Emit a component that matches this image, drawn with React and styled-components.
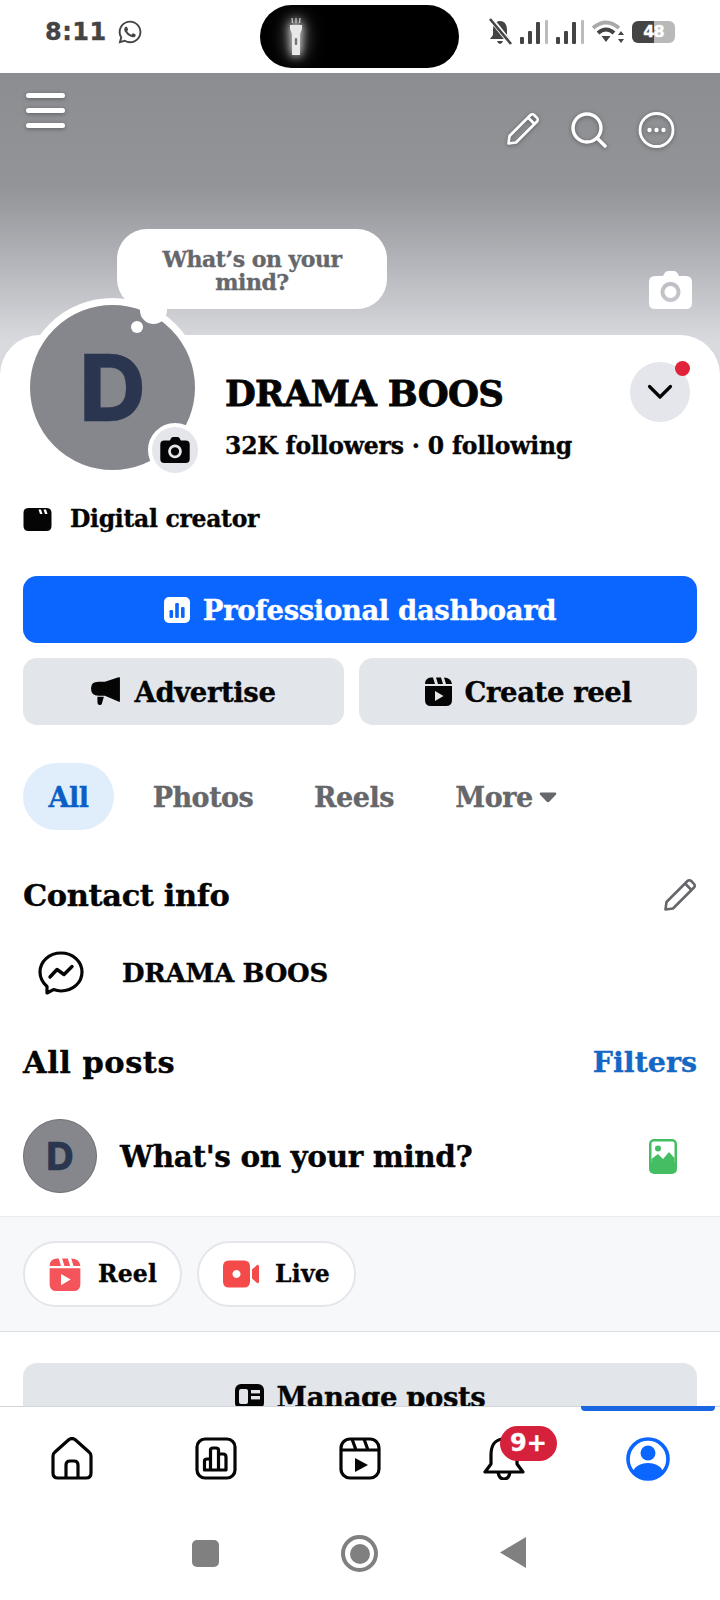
import React from 'react';
import styled, { createGlobalStyle } from 'styled-components';
import { FaWhatsapp } from 'react-icons/fa';

const SLAB = '"DejaVu Serif", "Liberation Serif", serif';

const Global = createGlobalStyle`
  html, body { margin: 0; padding: 0; background: #fff; }
  * { box-sizing: border-box; }
`;

const Screen = styled.div`
  width: 720px;
  height: 1600px;
  display: flex;
  flex-direction: column;
  overflow: hidden;
  background: #fff;
  font-family: ${SLAB};
  font-weight: 700;
  color: #050505;
  -webkit-text-stroke: 0.35px;
`;

const StatusBar = styled.div`
  height: 73px;
  flex: none;
  display: flex;
  align-items: flex-start;
`;

const StatusLeft = styled.div`
  width: 260px;
  height: 63px;
  padding-left: 45px;
  display: flex;
  align-items: center;
  gap: 10px;
  color: #444;
`;

const Time = styled.span`
  font: 700 24px "DejaVu Sans", sans-serif;
  letter-spacing: 0.5px;
`;

const Pill = styled.div`
  width: 199px;
  height: 63px;
  margin-top: 5px;
  border-radius: 32px;
  background: #000;
  padding: 12px 0 0 23px;
`;

const StatusRight = styled.div`
  margin-left: 29px;
  height: 63px;
  display: flex;
  align-items: center;
  gap: 7px;
`;

const Battery = styled.div`
  width: 43px;
  height: 22px;
  border-radius: 6px;
  background: linear-gradient(90deg, #444 0 52%, #b9b9b9 52% 100%);
  color: #fff;
  font: 700 16px "DejaVu Sans", sans-serif;
  letter-spacing: -1px;
  text-align: center;
  line-height: 22px;
`;

const Scroll = styled.div`
  flex: 1;
  min-height: 0;
  overflow: hidden;
`;

const Cover = styled.div`
  position: relative;
  height: 300px;
  padding: 19px 26px 0;
  display: flex;
  justify-content: space-between;
  align-items: flex-start;
  background: linear-gradient(180deg, #8c8d91 0, #939498 110px, #97989c 125px, #b4b5ba 190px, #d8dade 268px);
`;

const Burger = styled.div`
  width: 39px;
  display: flex;
  flex-direction: column;
  gap: 10px;
  padding-top: 1px;
  filter: drop-shadow(0 1px 2px rgba(0, 0, 0, 0.35));
`;

const BurgerLine = styled.span`
  height: 5px;
  border-radius: 3px;
  background: #fff;
`;

const CoverActions = styled.div`
  display: flex;
  gap: 31px;
  margin: 20px 19px 0 0;
  filter: drop-shadow(0 1px 2px rgba(0, 0, 0, 0.35));
`;

const Bubble = styled.div`
  position: absolute;
  left: 117px;
  top: 156px;
  width: 270px;
  height: 80px;
  border-radius: 30px;
  background: #fff;
  color: #65676b;
  font-size: 22px;
  line-height: 23px;
  text-align: center;
  padding: 19px 40px 0;
  letter-spacing: -0.5px;
`;

const CoverCamera = styled.div`
  position: absolute;
  right: 28px;
  top: 198px;
  line-height: 0;
`;

const Card = styled.div`
  position: relative;
  margin-top: -38px;
  padding: 0 23px;
  border-radius: 40px 40px 0 0;
  background: #fff;
`;

const ProfileRow = styled.div`
  display: flex;
  align-items: flex-start;
`;

const AvatarWrap = styled.div`
  position: relative;
  flex: none;
  margin-top: -37px;
`;

const Avatar = styled.div`
  width: ${p => p.$size}px;
  height: ${p => p.$size}px;
  border-radius: 50%;
  border: ${p => p.$ring}px solid ${p => (p.$ring > 2 ? '#fff' : '#6e6f74')};
  background: #86878c;
  color: #2a3550;
  display: flex;
  align-items: center;
  justify-content: center;
  flex: none;
  font-family: Inter, sans-serif;
  font-weight: 800;
  font-size: ${p => p.$font}px;
`;

const TailBig = styled.span`
  position: absolute;
  left: 117px;
  top: -1px;
  width: 27px;
  height: 27px;
  border-radius: 50%;
  background: #fff;
`;

const TailDot = styled.span`
  position: absolute;
  left: 108px;
  top: 23px;
  width: 12px;
  height: 12px;
  border-radius: 50%;
  background: #fff;
`;

const AvatarCamera = styled.div`
  position: absolute;
  left: 125px;
  top: 125px;
  width: 54px;
  height: 54px;
  border-radius: 50%;
  border: 4px solid #fff;
  background: #e4e6eb;
  display: flex;
  align-items: center;
  justify-content: center;
`;

const Info = styled.div`
  flex: 1;
  margin-left: 23px;
  padding-top: 39px;
`;

const Name = styled.div`
  font-size: 35.5px;
  line-height: 40px;
  letter-spacing: -0.7px;
  -webkit-text-stroke: 0.8px #050505;
`;

const Stats = styled.div`
  margin-top: 19px;
  font-size: 23.5px;
  line-height: 26px;
  letter-spacing: -0.2px;
`;

const Chevron = styled.div`
  position: relative;
  flex: none;
  width: 60px;
  height: 60px;
  margin: 27px 7px 0 0;
  border-radius: 50%;
  background: #e4e6eb;
  display: flex;
  align-items: center;
  justify-content: center;
`;

const RedDot = styled.span`
  position: absolute;
  right: 0;
  top: -1px;
  width: 15px;
  height: 15px;
  border-radius: 50%;
  background: #e0223a;
`;

const CreatorRow = styled.div`
  margin-top: 27px;
  height: 30px;
  display: flex;
  align-items: center;
  gap: 18px;
  font-size: 23.5px;
  letter-spacing: -0.3px;
`;

const Button = styled.div`
  height: 67px;
  flex: ${p => p.$flex || 'none'};
  border-radius: 14px;
  display: flex;
  align-items: center;
  justify-content: center;
  gap: 13px;
  font-size: 27.5px;
  letter-spacing: -0.4px;
  background: ${p => (p.$primary ? '#0a66ff' : '#e2e5ea')};
  color: ${p => (p.$primary ? '#fff' : '#050505')};
`;

const PrimaryWrap = styled.div`
  margin-top: 42px;
  display: flex;
  flex-direction: column;
`;

const ButtonRow = styled.div`
  margin-top: 15px;
  display: flex;
  gap: 15px;
`;

const Tabs = styled.div`
  margin-top: 38px;
  height: 67px;
  display: flex;
  align-items: center;
`;

const Tab = styled.div`
  height: 67px;
  padding-top: 2px;
  display: flex;
  align-items: center;
  justify-content: center;
  gap: 6px;
  border-radius: 34px;
  font-size: 27px;
  letter-spacing: -0.5px;
  width: ${p => p.$w}px;
  margin-right: ${p => p.$gap}px;
  background: ${p => (p.$active ? '#e0eefb' : 'transparent')};
  color: ${p => (p.$active ? '#0b5fc4' : '#65676b')};
`;

const SectionRow = styled.div`
  margin-top: ${p => p.$top}px;
  height: 36px;
  display: flex;
  align-items: center;
  justify-content: space-between;
`;

const Heading = styled.div`
  font-size: 30.5px;
  letter-spacing: ${p => p.$track || -0.4}px;
`;

const FilterLink = styled.div`
  font-size: 28.5px;
  color: #1467c4;
`;

const ContactRow = styled.div`
  margin-top: 38px;
  padding-left: 15px;
  height: 44px;
  display: flex;
  align-items: center;
  gap: 38px;
  font-size: 26px;
  letter-spacing: -0.3px;
`;

const Composer = styled.div`
  margin-top: 39px;
  height: 74px;
  display: flex;
  align-items: center;
`;

const ComposerText = styled.div`
  flex: 1;
  margin-left: 23px;
  font-size: 29.5px;
  letter-spacing: -0.4px;
`;

const ComposerIcon = styled.div`
  margin-right: 20px;
  line-height: 0;
`;

const Band = styled.div`
  margin-top: 23px;
  height: 116px;
  padding: 24px 23px 0;
  display: flex;
  align-items: flex-start;
  gap: 15px;
  background: #f7f8fa;
  border-top: 1px solid #e9ebee;
  border-bottom: 1px solid #dadde1;
`;

const Chip = styled.div`
  width: 159px;
  height: 66px;
  border-radius: 33px;
  border: 2px solid #e4e6eb;
  background: #fff;
  display: flex;
  align-items: center;
  justify-content: center;
  gap: 16px;
  font-size: 23.5px;
  letter-spacing: 0.2px;
`;

const ManageWrap = styled.div`
  margin-top: 31px;
  padding: 0 23px;
`;

const BottomArea = styled.div`
  position: relative;
  flex: none;
  height: 194px;
  background: #fff;
  border-top: 1px solid #d3d6db;
`;

const Indicator = styled.span`
  position: absolute;
  left: 581px;
  top: -1px;
  width: 134px;
  height: 5px;
  border-radius: 0 0 4px 4px;
  background: #1a66e0;
`;

const NavRow = styled.div`
  height: 107px;
  padding-top: 30px;
  display: flex;
  align-items: flex-start;
`;

const NavItem = styled.div`
  position: relative;
  width: 144px;
  display: flex;
  justify-content: center;
  line-height: 0;
`;

const Badge = styled.span`
  position: absolute;
  left: 68px;
  top: -11px;
  width: 57px;
  height: 35px;
  border-radius: 18px;
  background: #d6213c;
  color: #fff;
  font: 700 24px/35px "DejaVu Sans", sans-serif;
  text-align: center;
`;

const SystemBar = styled.div`
  height: 66px;
  padding-top: 24px;
  display: flex;
  align-items: flex-start;
`;

const SysSquare = styled.span`
  width: 27px;
  height: 27px;
  margin: 2px 0 0 192px;
  border-radius: 5px;
  background: #808080;
`;

const SysCircle = styled.span`
  width: 37px;
  height: 37px;
  margin: -3px 0 0 122px;
  border-radius: 50%;
  border: 4px solid #808080;
  display: flex;
  align-items: center;
  justify-content: center;
  &::after {
    content: '';
    width: 20px;
    height: 20px;
    border-radius: 50%;
    background: #808080;
  }
`;

const SysBack = styled.span`
  width: 26px;
  height: 31px;
  margin: -1px 0 0 122px;
  background: #808080;
  clip-path: polygon(100% 0, 100% 100%, 0 50%);
`;

const PencilIcon = ({ size = 34, color = '#fff', w = 2.6 }) => (
  <svg width={size} height={size} viewBox="0 0 34 34" fill="none" stroke={color} strokeWidth={w} strokeLinejoin="round">
    <path d="M2.5 31.5 L3.5 24 L24.5 3 a2.6 2.6 0 0 1 3.7 0 L31 5.8 a2.6 2.6 0 0 1 0 3.7 L10 30.5 Z" />
    <path d="M22 5.5 L28.5 12" />
  </svg>
);

const SearchIcon = () => (
  <svg width="36" height="36" viewBox="0 0 36 36" fill="none" stroke="#fff" strokeWidth="3.4" strokeLinecap="round">
    <circle cx="16" cy="16" r="14" />
    <path d="M26 26 L34 34" />
  </svg>
);

const MoreIcon = () => (
  <svg width="37" height="36" viewBox="0 0 37 36">
    <circle cx="18.5" cy="18" r="16.5" fill="none" stroke="#fff" strokeWidth="2.8" />
    <circle cx="11.5" cy="18" r="2.2" fill="#fff" />
    <circle cx="18.5" cy="18" r="2.2" fill="#fff" />
    <circle cx="25.5" cy="18" r="2.2" fill="#fff" />
  </svg>
);

const CameraIcon = ({ width = 43, height = 38, color = '#fff' }) => (
  <svg width={width} height={height} viewBox="0 0 43 38">
    <path
      fillRule="evenodd"
      fill={color}
      d="M14 5 L16 1.5 Q17 0 19 0 H25 Q27 0 28 1.5 L30 5 H37 Q43 5 43 11 V32 Q43 38 37 38 H6 Q0 38 0 32 V11 Q0 5 6 5 Z M21.5 11 a10 10 0 1 0 0.01 0 Z M21.5 15 a6 6 0 1 1 -0.01 0 Z"
    />
  </svg>
);

const ChevronIcon = () => (
  <svg width="26" height="16" viewBox="0 0 26 16" fill="none" stroke="#050505" strokeWidth="3.2" strokeLinecap="round" strokeLinejoin="round">
    <path d="M2.5 2.5 L13 13 L23.5 2.5" />
  </svg>
);

const FlashIcon = () => (
  <svg width="26" height="40" viewBox="0 0 26 40" style={{ overflow: 'visible', filter: 'drop-shadow(0 0 5px #fff) drop-shadow(0 0 9px rgba(255,255,255,0.6))' }}>
    <g stroke="#ccc" strokeWidth="1.2">
      <path d="M9 1 L9.5 6 M13 1 V6 M17 1 L16.5 6" />
    </g>
    <path fill="#e8e8e8" d="M7 8 H19 V12 L17 17 V38 H9 V17 L7 12 Z" />
    <rect x="11.8" y="21" width="2.4" height="7" rx="1" fill="#777" />
  </svg>
);

const BellOffIcon = () => (
  <svg width="25" height="28" viewBox="0 0 25 28">
    <path fill="#444" d="M12 3 C7 3 5 7 5 12 V17 L2 21 H22 L19 17 V12 C19 7 17 3 12 3 Z M9 23 H15 Q14 26 12 26 Q10 26 9 23 Z" />
    <path d="M3 1 L23 26" stroke="#fff" strokeWidth="5" />
    <path d="M2 1 L23 26" stroke="#444" strokeWidth="2.6" />
  </svg>
);

const SignalIcon = () => (
  <svg width="29" height="24" viewBox="0 0 29 24" fill="#444">
    <rect x="0" y="17" width="4" height="7" rx="1" />
    <rect x="8" y="11" width="4" height="13" rx="1" />
    <rect x="16" y="2" width="4" height="22" rx="1" />
    <rect x="25" y="0" width="3" height="24" rx="1" fill="#bbb" />
  </svg>
);

const WifiIcon = () => (
  <svg width="33" height="24" viewBox="0 0 33 24" fill="none">
    <path d="M1 8 Q14 -3 27 8" stroke="#aaa" strokeWidth="4" />
    <path d="M6 13 Q14 6 22 13" stroke="#444" strokeWidth="4" />
    <path d="M9.5 16 L18.5 16 L14 22 Z" fill="#444" />
    <path d="M29 11 L32 15 H26 Z M29 23 L32 19 H26 Z" fill="#444" />
  </svg>
);

const ClapperIcon = () => (
  <svg width="29" height="23" viewBox="0 0 28 23">
    <path fill="#050505" fillRule="evenodd" d="M5 0 H23 Q28 0 28 5 V18 Q28 23 23 23 H5 Q0 23 0 18 V5 Q0 0 5 0 Z M15 1.5 L16.5 6 H19 L17.5 1.5 Z M20 1.5 L21.5 6 H24 L22.5 1.5 Z" />
  </svg>
);

const DashIcon = () => (
  <svg width="26" height="26" viewBox="0 0 26 26">
    <rect width="26" height="26" rx="5" fill="#fff" />
    <rect x="5.5" y="13" width="3.6" height="8" rx="1.2" fill="#0a66ff" />
    <rect x="11.2" y="6" width="3.6" height="15" rx="1.2" fill="#0a66ff" />
    <rect x="17" y="10" width="3.6" height="11" rx="1.2" fill="#0a66ff" />
  </svg>
);

const MegaphoneIcon = () => (
  <svg width="30" height="29" viewBox="0 0 28 26" fill="#050505">
    <path d="M27 0 V22 Q27 23 25 22 L13 17 H7 Q0 17 0 10 Q0 4 7 4 H13 L25 0 Q27 -0.5 27 0 Z" />
    <path d="M6 18 H12 L10 25 Q9 26 7.5 25.5 Q6 25 6 23 Z" />
  </svg>
);

const ReelFilled = ({ width = 27, height = 29, color = '#050505' }) => (
  <svg width={width} height={height} viewBox="0 0 27 29">
    <path fill={color} d="M0 7 Q0 1 6 0.5 L8 0.5 L10 7 Z M11 0.5 H16 L18 7 H13 Z M19 0.5 Q26 0.5 27 7 H21 Z" />
    <path fill={color} fillRule="evenodd" d="M0 9 H27 V23 Q27 29 21 29 H6 Q0 29 0 23 Z M10 14 V24 L18.5 19 Z" />
  </svg>
);

const LiveIcon = () => (
  <svg width="36" height="28" viewBox="0 0 36 27">
    <path fill="#f44a4a" fillRule="evenodd" d="M6 0 H21 Q27 0 27 6 V21 Q27 27 21 27 H6 Q0 27 0 21 V6 Q0 0 6 0 Z M13.5 9.5 a4 4 0 1 0 0.01 0 Z" />
    <path fill="#f44a4a" d="M29 9 L34 4.5 Q36 3.5 36 6 V21 Q36 23.5 34 22.5 L29 18 Z" />
  </svg>
);

const MessengerIcon = () => (
  <svg width="46" height="44" viewBox="0 0 46 44" fill="none">
    <path stroke="#050505" strokeWidth="3.2" strokeLinejoin="round" d="M23 2 C11 2 2 10.5 2 21 C2 27 5 32 9 35.5 V42 L15.5 38.6 C18 39.5 20.4 40 23 40 C35 40 44 31.5 44 21 C44 10.5 35 2 23 2 Z" />
    <path stroke="#050505" strokeWidth="3.4" strokeLinecap="round" strokeLinejoin="round" d="M12 26 L19 18.5 L26 23.5 L34 15.5" />
  </svg>
);

const ImageIcon = () => (
  <svg width="28" height="35" viewBox="0 0 28 35">
    <rect width="28" height="35" rx="5" fill="#45bd62" />
    <rect x="2.5" y="2.5" width="23" height="22" rx="2" fill="#fff" />
    <circle cx="9" cy="9.5" r="3" fill="#45bd62" />
    <path fill="#45bd62" d="M2.5 20 L9 15 L14 20 L20 13 L25.5 19 V26 H2.5 Z" />
  </svg>
);

const ManageIcon = () => (
  <svg width="29" height="25" viewBox="0 0 29 25">
    <rect width="29" height="25" rx="6" fill="#050505" />
    <rect x="4" y="5" width="9" height="15" rx="2" fill="#e2e5ea" />
    <rect x="16" y="6" width="9" height="3.4" fill="#e2e5ea" />
    <rect x="16" y="12" width="9" height="3.4" fill="#e2e5ea" />
  </svg>
);

const HomeIcon = () => (
  <svg width="42" height="43" viewBox="0 0 42 43" fill="none" stroke="#050505" strokeWidth="3.2" strokeLinejoin="round">
    <path d="M2 19 Q2 16.5 4 15 L18 2.5 Q21 0.5 24 2.5 L38 15 Q40 16.5 40 19 V36 Q40 41 35 41 H7 Q2 41 2 36 Z" />
    <path d="M15 41 V28 Q15 24 19 24 H23 Q27 24 27 28 V41" />
  </svg>
);

const StatsIcon = () => (
  <svg width="42" height="43" viewBox="0 0 42 43" fill="none" stroke="#050505" strokeWidth="3.2" strokeLinejoin="round">
    <rect x="2" y="2" width="38" height="39" rx="8" />
    <path d="M9.5 33 V24 Q9.5 22 12 22 H15.5 V33 Z M15.5 33 V13 Q15.5 11 18 11 H21 Q23.5 11 23.5 13 V33 Z M23.5 33 V17 H28 Q31 17 31 20 V33 Z" />
  </svg>
);

const ReelIcon = () => (
  <svg width="42" height="43" viewBox="0 0 42 43" fill="none" stroke="#050505" strokeWidth="3.2" strokeLinejoin="round">
    <rect x="2" y="2" width="38" height="39" rx="9" />
    <path d="M2 13 H40 M13 2 L17 13 M25 2 L29 13" />
    <path d="M16 21 L29 28 L16 35 Z" fill="#050505" stroke="none" />
  </svg>
);

const BellIcon = () => (
  <svg width="42" height="43" viewBox="0 0 42 43" fill="none" stroke="#050505" strokeWidth="3.2" strokeLinejoin="round">
    <path d="M21 2 C11 2 8 10 8 18 V27 L2 35 H40 L34 27 V18 C34 10 31 2 21 2 Z" />
    <path d="M15 35 Q16 42 21 42 Q26 42 27 35" />
  </svg>
);

const ProfileIcon = () => (
  <svg width="44" height="44" viewBox="0 0 44 44">
    <defs>
      <clipPath id="profile-clip"><circle cx="22" cy="22" r="20" /></clipPath>
    </defs>
    <circle cx="22" cy="22" r="20" fill="#fff" />
    <g clipPath="url(#profile-clip)" fill="#0a66ff">
      <circle cx="22" cy="16" r="7.5" />
      <ellipse cx="22" cy="36" rx="15" ry="10" />
    </g>
    <circle cx="22" cy="22" r="20" fill="none" stroke="#0a66ff" strokeWidth="3.6" />
  </svg>
);

const Caret = () => (
  <svg width="18" height="11" viewBox="0 0 18 11">
    <path d="M2 0.5 H16 Q18 0.5 17 2.5 L10.5 9.5 Q9 11 7.5 9.5 L1 2.5 Q0 0.5 2 0.5 Z" fill="#65676b" />
  </svg>
);

const App = () => (
  <Screen>
    <Global />
    <StatusBar>
      <StatusLeft>
        <Time>8:11</Time>
        <FaWhatsapp size={26} />
      </StatusLeft>
      <Pill><FlashIcon /></Pill>
      <StatusRight>
        <BellOffIcon />
        <SignalIcon />
        <SignalIcon />
        <WifiIcon />
        <Battery>48</Battery>
      </StatusRight>
    </StatusBar>

    <Scroll>
      <Cover>
        <Burger>
          <BurgerLine />
          <BurgerLine />
          <BurgerLine />
        </Burger>
        <CoverActions>
          <PencilIcon />
          <SearchIcon />
          <MoreIcon />
        </CoverActions>
        <Bubble>What’s on your mind?</Bubble>
        <CoverCamera><CameraIcon /></CoverCamera>
      </Cover>

      <Card>
        <ProfileRow>
          <AvatarWrap>
            <Avatar $size={179} $ring={7} $font={92}>D</Avatar>
            <TailBig />
            <TailDot />
            <AvatarCamera><CameraIcon width={30} height={26} color="#050505" /></AvatarCamera>
          </AvatarWrap>
          <Info>
            <Name>DRAMA BOOS</Name>
            <Stats>32K followers · 0 following</Stats>
          </Info>
          <Chevron>
            <ChevronIcon />
            <RedDot />
          </Chevron>
        </ProfileRow>

        <CreatorRow>
          <ClapperIcon />
          Digital creator
        </CreatorRow>

        <PrimaryWrap>
          <Button $primary><DashIcon />Professional dashboard</Button>
        </PrimaryWrap>
        <ButtonRow>
          <Button $flex="0 0 321px"><MegaphoneIcon />Advertise</Button>
          <Button $flex="1"><ReelFilled />Create reel</Button>
        </ButtonRow>

        <Tabs>
          <Tab $active $w={91} $gap={31}>All</Tab>
          <Tab $w={116} $gap={45}>Photos</Tab>
          <Tab $w={96} $gap={48}>Reels</Tab>
          <Tab $w={112} $gap={0}>More<Caret /></Tab>
        </Tabs>

        <SectionRow $top={47}>
          <Heading>Contact info</Heading>
          <PencilIcon color="#65676b" />
        </SectionRow>

        <ContactRow>
          <MessengerIcon />
          DRAMA BOOS
        </ContactRow>

        <SectionRow $top={49}>
          <Heading $track={0.5}>All posts</Heading>
          <FilterLink>Filters</FilterLink>
        </SectionRow>

        <Composer>
          <Avatar $size={74} $ring={1} $font={38}>D</Avatar>
          <ComposerText>What's on your mind?</ComposerText>
          <ComposerIcon><ImageIcon /></ComposerIcon>
        </Composer>
      </Card>

      <Band>
        <Chip><ReelFilled width={34} height={33} color="#f4545a" />Reel</Chip>
        <Chip><LiveIcon />Live</Chip>
      </Band>

      <ManageWrap>
        <Button><ManageIcon />Manage posts</Button>
      </ManageWrap>
    </Scroll>

    <BottomArea>
      <Indicator />
      <NavRow>
        <NavItem><HomeIcon /></NavItem>
        <NavItem><StatsIcon /></NavItem>
        <NavItem><ReelIcon /></NavItem>
        <NavItem><BellIcon /><Badge>9+</Badge></NavItem>
        <NavItem><ProfileIcon /></NavItem>
      </NavRow>
      <SystemBar>
        <SysSquare />
        <SysCircle />
        <SysBack />
      </SystemBar>
    </BottomArea>
  </Screen>
);

export default App;
